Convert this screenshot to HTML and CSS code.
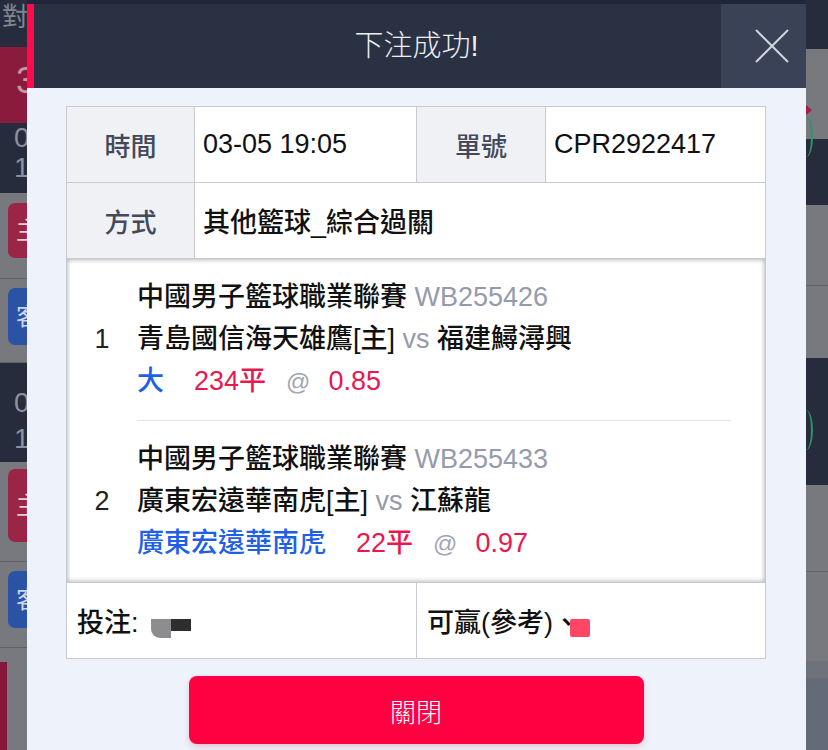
FILE: index.html
```html
<!DOCTYPE html>
<html lang="zh-Hant">
<head>
    <meta charset="UTF-8">
    <meta name="viewport" content="width=device-width, initial-scale=1.0">
    <title>下注成功</title>
    <link rel="stylesheet" href="styles.css">
</head>
<body>

<div class="page">

    <!-- page behind the dialog, dimmed -->
    <div class="side side-left">
        <div class="blk dark l-top"><span class="ghost">對</span></div>
        <div class="blk crimson l-score"><span class="ghost big">3</span></div>
        <div class="blk dark l-time"><span class="ghost">0</span><span class="ghost">1</span></div>
        <div class="blk gray l-row1"><span class="badge home">主</span></div>
        <div class="sep"></div>
        <div class="blk gray l-row2"><span class="badge away">客</span></div>
        <div class="sep"></div>
        <div class="blk dark l-time2"><span class="ghost">0</span><span class="ghost">1</span></div>
        <div class="blk gray l-row3"><span class="badge home tall">主</span></div>
        <div class="sep"></div>
        <div class="blk gray l-row4"><span class="badge away">客</span></div>
        <div class="sep"></div>
        <div class="blk gray l-rest"><span class="mark"></span></div>
    </div>

    <div class="stage">
        <div class="modal">
            <div class="modal-head">
                <div class="accent"></div>
                <h2 class="modal-title">下注成功!</h2>
                <button class="close" type="button" aria-label="close">
                    <svg width="34" height="34" viewBox="0 0 34 34">
                        <path d="M1 1L33 33M33 1L1 33" stroke="#cfd3dc" stroke-width="2" fill="none"/>
                    </svg>
                </button>
            </div>

            <div class="modal-body">
                <table class="slip">
                    <colgroup>
                        <col class="c1"><col class="c2"><col class="c3"><col class="c4">
                    </colgroup>
                    <tr>
                        <th>時間</th>
                        <td class="val">03-05 19:05</td>
                        <th>單號</th>
                        <td class="val">CPR2922417</td>
                    </tr>
                    <tr>
                        <th>方式</th>
                        <td class="val" colspan="3">其他籃球_綜合過關</td>
                    </tr>
                    <tr>
                        <td class="legs-cell" colspan="4">
                            <div class="leg">
                                <div class="leg-no">1</div>
                                <div class="leg-body">
                                    <p class="line">中國男子籃球職業聯賽 <span class="muted">WB255426</span></p>
                                    <p class="line">青島國信海天雄鷹[主] <span class="muted">vs</span> 福建鱘潯興</p>
                                    <p class="line pick">
                                        <span class="blue">大</span>
                                        <span class="red">234平</span>
                                        <span class="at">@</span>
                                        <span class="red">0.85</span>
                                    </p>
                                </div>
                            </div>
                            <div class="leg">
                                <div class="leg-no">2</div>
                                <div class="leg-body">
                                    <p class="line">中國男子籃球職業聯賽 <span class="muted">WB255433</span></p>
                                    <p class="line">廣東宏遠華南虎[主] <span class="muted">vs</span> 江蘇龍</p>
                                    <p class="line pick">
                                        <span class="blue">廣東宏遠華南虎</span>
                                        <span class="red">22平</span>
                                        <span class="at">@</span>
                                        <span class="red">0.97</span>
                                    </p>
                                </div>
                            </div>
                        </td>
                    </tr>
                    <tr class="foot">
                        <td colspan="2">投注:<span class="redact"><i class="r-light"></i><i class="r-dark"></i></span></td>
                        <td colspan="2">可贏(參考)<span class="cut">、</span><span class="redact-red"></span></td>
                    </tr>
                </table>

                <button class="btn-close" type="button">關閉</button>
            </div>
        </div>
    </div>

    <div class="side side-right">
        <div class="blk dark r1"></div>
        <div class="blk gray r2"><span class="tri"></span></div>
        <div class="blk dark r3"><span class="arc arc-a"></span></div>
        <div class="blk gray r4"></div>
        <div class="sep"></div>
        <div class="blk gray r5"></div>
        <div class="blk dark r6"><span class="arc arc-b"></span></div>
        <div class="blk gray r7"></div>
        <div class="sep"></div>
        <div class="blk gray r8"></div>
        <div class="blk r9"></div>
        <div class="blk r10"></div>
    </div>

</div>

</body>
</html>
```

FILE: styles.css
```css
body {
    margin: 0;
    width: 828px;
    height: 750px;
    overflow: hidden;
    background: #262c3b;
    font-family: "Liberation Sans", "Noto Sans CJK TC", sans-serif;
}

.page {
    display: flex;
    height: 750px;
}

/* dimmed page behind */
.side {
    flex: none;
    display: flex;
    flex-direction: column;
    overflow: hidden;
}

.side-left {
    width: 27px;
}

.side-right {
    width: 22px;
}

.blk {
    flex: none;
    display: flex;
    flex-direction: column;
}

.dark {
    background: #262c3b;
}

.gray {
    background: #77797f;
}

.crimson {
    background: #8b1b3c;
}

.sep {
    flex: none;
    height: 1px;
    background: #5e6169;
}

.ghost {
    color: #7f8594;
    font-size: 26px;
    line-height: 30px;
    white-space: nowrap;
}

.ghost.big {
    color: #c697a5;
    font-size: 36px;
    line-height: 36px;
}

.l-top {
    height: 47px;
    padding-left: 2px;
    padding-top: 2px;
    box-sizing: border-box;
}

.l-score {
    height: 76px;
    padding: 16px 0 0 16px;
    box-sizing: border-box;
}

.l-time {
    height: 70px;
    padding-left: 14px;
    padding-top: 0;
    box-sizing: border-box;
}

.l-time .ghost,
.l-time2 .ghost {
    color: #8b909c;
    font-size: 28px;
}

.l-row1 {
    height: 85px;
}

.l-row2 {
    height: 83px;
}

.l-time2 {
    height: 99px;
    padding: 22px 0 0 14px;
    box-sizing: border-box;
}

.l-time2 .ghost {
    line-height: 36px;
}

.l-row3 {
    height: 99px;
}

.l-row4 {
    height: 85px;
}

.l-rest {
    flex: 1;
    flex-direction: row;
}

.mark {
    width: 7px;
    margin-top: 14px;
    background: #86193a;
}

.badge {
    width: 40px;
    height: 55px;
    margin: 10px 0 0 8px;
    border-radius: 7px;
    color: #e6cdd4;
    font-size: 24px;
    line-height: 55px;
    text-align: center;
}

.badge.home {
    background: #9a2546;
}

.badge.away {
    background: #2b53a4;
    height: 57px;
    line-height: 57px;
    margin-top: 9px;
    color: #cdd6ea;
}

.badge.tall {
    height: 73px;
    line-height: 73px;
    margin-top: 7px;
}

.r1 { height: 49px; }
.r2 { height: 90px; }
.r3 { height: 66px; }
.r4 { height: 80px; }
.r5 { height: 72px; }
.r6 { height: 127px; }
.r7 { height: 86px; }
.r8 { height: 89px; }
.r9 { height: 17px; background: #6f727b; }
.r10 { flex: 1; background: #636a78; }

.tri {
    width: 0;
    height: 0;
    margin-top: 56px;
    border-left: 6px solid #a61d45;
    border-top: 5px solid transparent;
    border-bottom: 5px solid transparent;
}

.arc {
    width: 5px;
    height: 40px;
    border-right: 2px solid #2f9566;
    border-radius: 0 100% 100% 0 / 0 50% 50% 0;
}

.arc-a {
    margin-top: -22px;
}

.arc-b {
    margin-top: 52px;
}

/* dialog */
.stage {
    flex: none;
    width: 779px;
    padding-top: 4px;
    background: #20263a;
}

.modal {
    height: 746px;
    background: #eef2fb;
    display: flex;
    flex-direction: column;
}

.modal-head {
    flex: none;
    display: flex;
    height: 84px;
    background: #2a3143;
}

.accent {
    width: 7px;
    background: #ff0a4a;
}

.modal-title {
    flex: 1;
    margin: 0;
    padding-left: 78px;
    text-align: center;
    color: #eceef3;
    font-size: 29px;
    font-weight: 300;
    line-height: 84px;
}

.close {
    width: 85px;
    padding: 0 17px 0 0;
    border: none;
    background: #394257;
    display: flex;
    align-items: center;
    justify-content: flex-end;
}

.modal-body {
    padding: 18px 40px 0 39px;
}

.slip {
    width: 700px;
    table-layout: fixed;
    border-collapse: collapse;
    background: #fff;
}

.c1 { width: 128px; }
.c2 { width: 222px; }
.c3 { width: 129px; }

.slip th,
.slip td {
    height: 76px;
    padding: 0 8px;
    border: 1px solid #c9cacf;
    box-sizing: border-box;
}

.slip th {
    background: #f0f1f5;
    color: #434959;
    font-size: 26px;
    font-weight: 500;
    text-align: center;
}

.slip .val {
    color: #111;
    font-size: 27px;
    font-weight: 500;
    white-space: nowrap;
}

.slip .legs-cell {
    height: auto;
    padding: 0;
    box-shadow: inset 0 2px 4px rgba(0, 0, 0, 0.14), inset 0 -2px 4px rgba(0, 0, 0, 0.12), inset -2px 0 4px rgba(0, 0, 0, 0.08), inset 2px 0 4px rgba(0, 0, 0, 0.06);
}

.leg {
    display: flex;
    align-items: center;
}

.leg-no {
    width: 70px;
    flex: none;
    text-align: center;
    color: #222;
    font-size: 27px;
}

.leg-body {
    flex: 1;
    margin-right: 34px;
    padding: 17px 0;
}

.leg + .leg .leg-body {
    border-top: 1px solid #e2e4ea;
}

.line {
    margin: 0;
    color: #111;
    font-size: 27px;
    font-weight: 500;
    line-height: 42px;
    white-space: nowrap;
}

.muted {
    color: #959bab;
    font-weight: 400;
}

.pick {
    display: flex;
    align-items: baseline;
    gap: 20px;
}

.blue {
    color: #1f5fe8;
    margin-right: 10px;
}

.red {
    color: #ea1850;
}

.at {
    color: #a0a5b2;
    font-size: 24px;
    font-weight: 400;
    margin-right: -2px;
}

.slip .foot td {
    padding: 0 10px;
    color: #111;
    font-size: 27px;
    font-weight: 500;
    white-space: nowrap;
}

.redact {
    display: inline-flex;
    align-items: flex-start;
    margin-left: 12px;
    vertical-align: -6px;
}

.r-light {
    width: 20px;
    height: 19px;
    background: #8d8d8f;
    border-radius: 0 0 0 9px;
}

.r-dark {
    width: 20px;
    height: 12px;
    background: #2e2e30;
}

.cut {
    letter-spacing: -10px;
}

.redact-red {
    display: inline-block;
    width: 20px;
    height: 18px;
    background: #ff4666;
    border-radius: 2px;
    vertical-align: -5px;
}

.btn-close {
    display: block;
    width: 455px;
    height: 68px;
    margin: 17px auto 0;
    border: none;
    border-radius: 8px;
    background: #ff0040;
    color: #fff;
    font-family: "Liberation Sans", "Noto Sans CJK TC", sans-serif;
    font-size: 26px;
    font-weight: 300;
    box-shadow: 0 3px 6px rgba(200, 0, 50, 0.18);
}
```
